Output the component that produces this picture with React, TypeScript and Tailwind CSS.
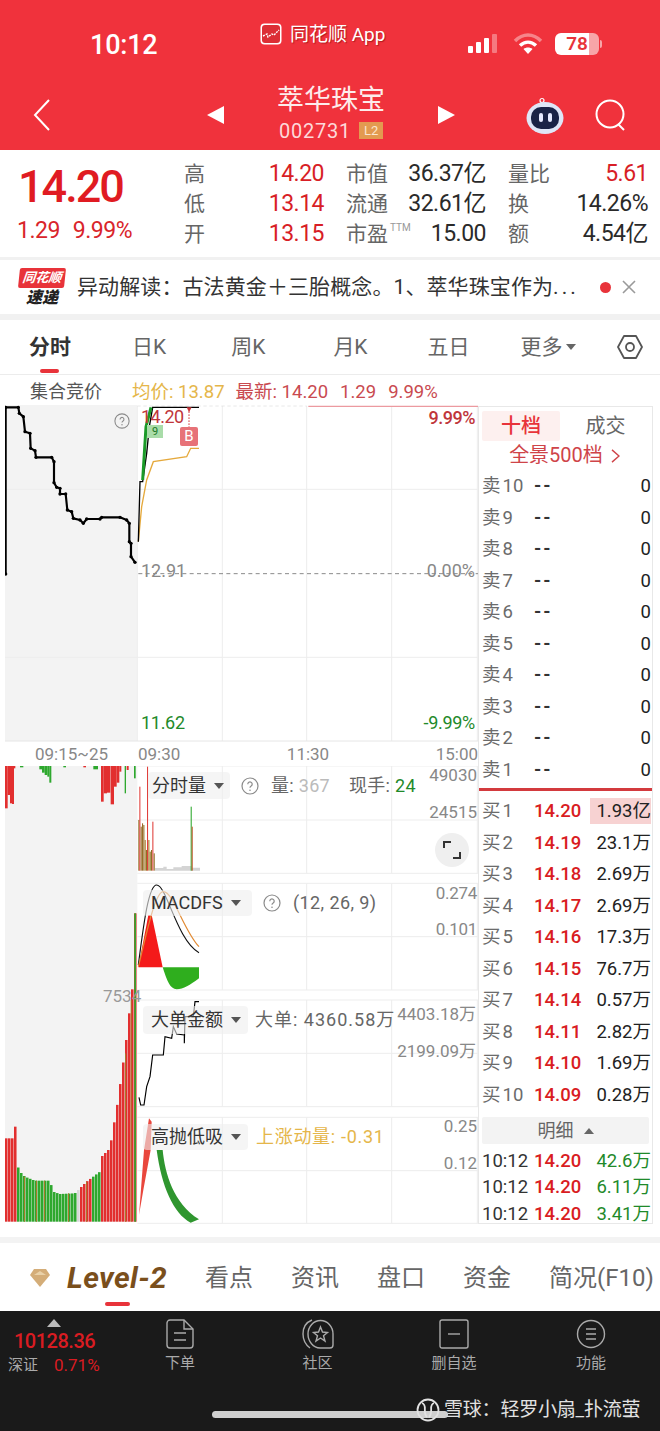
import React from "react";

type Seg = [number, number];
function interp(pts: Seg[], x: number) {
  for (let i = 0; i < pts.length - 1; i++) {
    if (x >= pts[i][0] && x <= pts[i + 1][0]) {
      const t = (x - pts[i][0]) / (pts[i + 1][0] - pts[i][0] || 1);
      return pts[i][1] + t * (pts[i + 1][1] - pts[i][1]);
    }
  }
  return pts[pts.length - 1][1];
}

const bottomProfile: Seg[] = [[15,1305],[18,1305],[19,1135],[44,1135],[45,1100],[48,1100],[50,1210],[60,1235],[75,1250],[105,1262],[150,1262],[160,1295],[180,1302],[225,1300],[260,1265],[300,1235],[305,1190],[330,1165],[345,1075],[358,1000],[365,935],[375,880],[381,820],[388,760],[398,680],[403,680],[404,460],[408,460]];
function bottomColor(x: number) {
  if (x < 49) return "#e22f2f";
  if (x < 155) return "#2ea82e";
  if (x >= 224 && x < 234) return "#d8d8d8";
  if (x < 234) return "#2ea82e";
  if (x < 272) return "#e22f2f";
  if (x < 303) return "#2ea82e";
  return "#e22f2f";
}
const topBars: [number, number, number, string][] = [
  [15,8,145,"#e22f2f"],[23,7,105,"#e22f2f"],[30,6,130,"#e22f2f"],[36,6,132,"#e22f2f"],[42,4,25,"#e22f2f"],
  [60,10,22,"#2ea82e"],[118,8,28,"#2ea82e"],[126,8,38,"#2ea82e"],[134,8,45,"#2ea82e"],[142,6,50,"#2ea82e"],[148,6,68,"#2ea82e"],
  [190,8,22,"#2ea82e"],[250,8,22,"#e22f2f"],[280,14,28,"#2ea82e"],
  [303,8,125,"#e22f2f"],[311,10,100,"#e22f2f"],[321,10,98,"#e22f2f"],[332,10,133,"#e22f2f"],[342,8,80,"#e22f2f"],[350,8,68,"#e22f2f"],[358,6,35,"#e22f2f"],
  [374,4,100,"#2ea82e"],[380,6,30,"#e22f2f"],[402,5,55,"#2ea82e"],
];
const auction: Seg[] = [[17,762],[17,262],[55,262],[58,280],[70,290],[75,335],[90,340],[92,385],[105,392],[108,412],[155,412],[162,425],[162,488],[170,502],[180,505],[180,522],[197,522],[202,570],[215,575],[220,595],[240,600],[250,610],[260,597],[300,597],[305,592],[360,592],[380,600],[388,610],[388,665],[393,670],[393,710],[405,727]];
const volBars: [number, number, string][] = [[415,180,"#8f6f25"],[418,80,"#e0403c"],[422,200,"#8f6f25"],[426,190,"#9a6a2a"],[430,195,"#8f6f25"],[434,240,"#a8792a"],[438,270,"#8f6f25"],[441,20,"#e0403c"],[445,240,"#a8792a"],[449,275,"#8f6f25"],[453,270,"#8f6f25"],[457,185,"#e0403c"],[461,280,"#8f6f25"],[572,140,"#2ea82e"],[575,200,"#c0572a"]];

function Question({ className }: { className: string }) {
  return (
    <svg viewBox="0 0 18 18" className={className} fill="none">
      <circle cx="9" cy="9" r="8" stroke="#8a8a8a" strokeWidth="1.2" />
      <path d="M6.8 7.2a2.2 2.2 0 1 1 3.4 1.8c-.8.5-1.2.9-1.2 1.8" stroke="#8a8a8a" strokeWidth="1.2" />
      <circle cx="9" cy="13.2" r=".8" fill="#8a8a8a" />
    </svg>
  );
}

function Caret() {
  return <span className="ml-[8px] inline-block h-0 w-0 border-x-[5px] border-t-[6px] border-x-transparent border-t-[#555]" />;
}

function MainChart() {
  return (
    <svg viewBox="15 255 1419 1011" className="block h-[337px] w-[473px]" fill="none">
      <rect x="15" y="255" width="397" height="1008" fill="#f3f3f3" />
      {[508, 1012].map((y) => <line key={y} x1="15" x2="1434" y1={y} y2={y} stroke="#ededed" strokeWidth="3" />)}
      {[412, 667, 920, 1175, 1432].map((x) => <line key={x} x1={x} x2={x} y1="258" y2="1263" stroke="#ededed" strokeWidth="3" />)}
      <line x1="15" x2="1434" y1="1263" y2="1263" stroke="#e6e6e6" strokeWidth="3" />
      <line x1="412" x2="920" y1="258" y2="258" stroke="#ddd" strokeWidth="2" strokeDasharray="10 8" />
      <line x1="925" x2="1434" y1="259" y2="259" stroke="#ec9aa0" strokeWidth="4" />
      <line x1="415" x2="1434" y1="761" y2="761" stroke="#8a8a8a" strokeWidth="3" strokeDasharray="12 10" />
      <polyline points={auction.map((p) => p.join(",")).join(" ")} stroke="#000" strokeWidth="6.5" strokeLinejoin="round" />
      {auction.map(([x, y]) => <circle key={`${x}-${y}`} cx={x} cy={y} r="5" fill="#000" />)}
      <path d="M415 665L425 560L440 480L460 425L560 410L572 385H597" stroke="#e5a93c" strokeWidth="4" />
      <path d="M415 665L420 485H428L440 400L448 320L458 262H597" stroke="#000" strokeWidth="4" />
      <path d="M428 480L438 320L453 262" stroke="#1b9a28" strokeWidth="9" />
      <line x1="567" x2="567" y1="265" y2="322" stroke="#d33a3e" strokeWidth="3" strokeDasharray="5 4" />
      <path d="M560 262H575L567 277Z" fill="#c9353a" />
    </svg>
  );
}

function LowerCharts() {
  const bars: React.ReactElement[] = [];
  for (let x = 15; x < 408; x += 9) {
    const top = interp(bottomProfile, x + 4);
    bars.push(<rect key={x} x={x} y={top} width="7.6" height={1385 - top} fill={bottomColor(x)} />);
  }
  const grid = [[18, 340, 180], [370, 690, 530], [720, 1040, 880], [1072, 1390, 1232]];
  return (
    <svg viewBox="15 18 1419 1374" className="block h-[458px] w-[473px]" fill="none">
      <rect x="15" y="18" width="397" height="1368" fill="#f3f3f3" />
      {topBars.map(([x, w, b, c], i) => <rect key={i} x={x} y="18" width={w} height={b - 18} fill={c} />)}
      {bars}
      <rect x="403" y="460" width="5" height="925" fill="#2ea82e" />
      {[[72, 1250], [108, 1262], [132, 1262], [204, 1300], [258, 1265], [375, 880], [392, 720]].map(([x, y]) => (
        <rect key={x} x={x} y={y} width="3" height={1385 - y} fill="#a8792a" />
      ))}
      {grid.map(([t, b, m]) => (
        <g key={t} stroke="#ededed" strokeWidth="3">
          <line x1="412" x2="1434" y1={t} y2={t} />
          <line x1="412" x2="1434" y1={m} y2={m} />
          <line x1="412" x2="1434" y1={b} y2={b} />
          {[667, 920, 1175, 1432].map((x) => <line key={x} x1={x} x2={x} y1={t} y2={b} />)}
        </g>
      ))}
      {/* volume */}
      <path d="M465 332V324H490V320H500V327H520V322H545V318H575V323H600V332Z" fill="#d4d4d4" />
      {volBars.map(([x, y, c]) => <rect key={x} x={x} y={y} width="3.2" height={332 - y} fill={c} />)}
      {/* macd */}
      <path d="M415 622L445 465H455L488 622Z" fill="#f41a1a" />
      <path d="M488 622H597V655C570 675 550 688 530 688C510 688 500 660 488 622Z" fill="#2fae1e" />
      <path d="M415 615C430 500 445 375 470 375C500 375 530 540 597 578" stroke="#111" strokeWidth="3.5" />
      <path d="M415 620C440 520 465 395 490 395C520 395 550 510 597 560" stroke="#e28a32" strokeWidth="3.5" />
      {/* big order */}
      <path d="M417 1012L422 1035H432L440 980L450 950L458 885H490L495 830L515 835L520 800L530 822L553 825V850L555 770H580L585 725H597" stroke="#000" strokeWidth="3.5" />
      {/* high low */}
      <path d="M417 1365L432 1170L447 1075L455 1085L452 1170L430 1290Z" fill="#e9473d" />
      <path d="M470 1170H488C495 1240 520 1330 597 1378L572 1388C520 1360 485 1280 470 1170Z" fill="#2f962f" />
    </svg>
  );
}

function Book({ label, price, value, up, hl }: { label: string; price: string; value: string; up: boolean; hl?: boolean }) {
  const [ch, num] = label.split(" ");
  return (
    <div className="grid h-[31.5px] grid-cols-[52px_50px_1fr] items-center text-[18.5px] leading-[26px]">
      <div className="text-[#6b6b6b]">{ch}<span className="ml-[2px]">{num}</span></div>
      <div className={up ? "font-medium text-[#d91c22]" : "font-bold tracking-[2px] text-[#333]"}>{price}</div>
      <div className="flex justify-end">
        <span className={hl ? "bg-[#f7d2d2] pl-[6px] text-[#222]" : "text-[#222]"}>{value}</span>
      </div>
    </div>
  );
}

function Expand() {
  return (
    <svg viewBox="0 0 34 34" className="h-[34px] w-[34px]" fill="none">
      <circle cx="17" cy="17" r="17" fill="#efefef" />
      <path d="M9 15V9H16M25 19V25H18" stroke="#333" strokeWidth="2" />
    </svg>
  );
}

export default function App() {
  const quote: [string, string, string, string, string, string][] = [
    ["高", "14.20", "市值", "36.37亿", "量比", "5.61"],
    ["低", "13.14", "流通", "32.61亿", "换", "14.26%"],
    ["开", "13.15", "市盈", "15.00", "额", "4.54亿"],
  ];
  const sells = [10, 9, 8, 7, 6, 5, 4, 3, 2, 1];
  const buys: [string, string][] = [["14.20","1.93亿"],["14.19","23.1万"],["14.18","2.69万"],["14.17","2.69万"],["14.16","17.3万"],["14.15","76.7万"],["14.14","0.57万"],["14.11","2.82万"],["14.10","1.69万"],["14.09","0.28万"]];
  const trades = [["10:12","14.20","42.6万"],["10:12","14.20","6.11万"],["10:12","14.20","3.41万"]];

  return (
    <div className="relative flex h-[1431px] w-[660px] flex-col overflow-hidden bg-white font-['Roboto','Noto_Sans_CJK_SC',sans-serif]">
      {/* header */}
      <header className="h-[150px] shrink-0 bg-[#F0323C] text-white">
        <div className="flex h-[75px]">
          <div className="w-[260px] pl-[90px] pt-[27px] text-[27px] font-medium leading-[36px] tracking-[-0.2px]">10:12</div>
          <div className="flex w-[208px] items-start gap-[8px] pt-[23px]">
            <svg viewBox="0 0 22 22" className="h-[22px] w-[22px]">
              <rect x="0.500" y="0.500" width="21" height="21" rx="4" fill="#fff" />
              <rect x="2" y="2" width="18" height="18" rx="3" fill="#dc2e35" />
              <path d="M3 13L7 11L8 14L12 11L14 12L19 7" stroke="#fff" strokeWidth="1.4" fill="none" strokeDasharray="2 1" />
            </svg>
            <span className="text-[19px] leading-[24px] [text-shadow:1px_1px_1px_rgba(120,0,0,0.5)]">同花顺 App</span>
          </div>
          <div className="flex items-start pt-[33px]">
            <svg viewBox="0 0 32 20" className="h-[20px] w-[32px]">
              <rect x="0" y="13" width="5" height="7" rx="1" fill="#fff" />
              <rect x="8" y="9" width="5" height="11" rx="1" fill="#fff" />
              <rect x="16" y="5" width="5" height="15" rx="1" fill="#fff" />
              <rect x="24" y="1" width="5" height="19" rx="1" fill="#fff" fillOpacity="0.35" />
            </svg>
            <svg viewBox="0 0 30 22" className="ml-[13px] h-[22px] w-[30px]" fill="none">
              <path d="M2 8C10 0 20 0 28 8" stroke="#fff" strokeOpacity="0.4" strokeWidth="3.500" />
              <path d="M7 12.500C12 8 18 8 23 12.500" stroke="#fff" strokeWidth="3.500" />
              <path d="M15 21L10.500 16C13 14 17 14 19.500 16Z" fill="#fff" />
            </svg>
            <div className="ml-[12px] flex h-[22px] w-[44px] items-center justify-center rounded-[6px] bg-[linear-gradient(90deg,#fff_78%,#f7a5a8_78%)] text-[19px] font-semibold leading-[22px] text-[#e8333a]">78</div>
            <div className="ml-[1px] mt-[7px] h-[8px] w-[2px] rounded-r-[2px] bg-[#f7a5a8]" />
          </div>
        </div>
        <div className="flex h-[75px] items-center">
          <div className="w-[207px] pl-[33px] pt-[4px]">
            <svg viewBox="0 0 18 32" className="h-[32px] w-[18px]" fill="none">
              <path d="M16 1L2 16L16 31" stroke="#fff" strokeWidth="2" />
            </svg>
          </div>
          <svg viewBox="0 0 17 18" className="mt-[4px] h-[18px] w-[17px]"><path d="M17 0V18L0 9Z" fill="#fff" /></svg>
          <div className="flex w-[214px] flex-col items-center">
            <div className="text-[27px] leading-[34px] text-[#fdecec]">萃华珠宝</div>
            <div className="mt-[2px] flex items-center gap-[8px]">
              <span className="text-[20px] leading-[24px] tracking-[0.8px] text-[#fdd9da]">002731</span>
              <span className="flex h-[17px] w-[24px] items-center justify-center bg-[#e39a50] text-[13px] leading-[17px] text-[#fbe6cf]">L2</span>
            </div>
          </div>
          <svg viewBox="0 0 17 18" className="mt-[4px] h-[18px] w-[17px]"><path d="M0 0V18L17 9Z" fill="#fff" /></svg>
          <svg viewBox="0 0 38 38" className="ml-[71px] mt-[6px] h-[38px] w-[38px]">
            <circle cx="16" cy="3.500" r="2" fill="none" stroke="#fff" strokeWidth="1.200" />
            <ellipse cx="19" cy="21" rx="18.500" ry="16" fill="#dfe6f7" />
            <rect x="5" y="10" width="28" height="22" rx="10" fill="#1a2346" />
            <rect x="13" y="16" width="4" height="9" rx="2" fill="#e6eaff" />
            <rect x="22" y="16" width="4" height="9" rx="2" fill="#e6eaff" />
          </svg>
          <svg viewBox="0 0 32 32" className="ml-[31px] mt-[4px] h-[32px] w-[32px]" fill="none">
            <circle cx="15" cy="15" r="13.500" stroke="#fff" strokeWidth="2" />
            <path d="M23 25L29 31" stroke="#fff" strokeWidth="2" />
          </svg>
        </div>
      </header>

      {/* quote */}
      <section className="flex h-[107px] shrink-0">
        <div className="w-[184px] pl-[18px] pt-[15px]">
          <div className="text-[45px] font-medium leading-[44px] tracking-[-2px] text-[#e01b22]">14.20</div>
          <div className="-ml-[1px] mt-[9px] flex gap-[13px] text-[23px] leading-[26px] tracking-[-0.5px] text-[#d9252b]">
            <span>1.29</span>
            <span>9.99%</span>
          </div>
        </div>
        <div className="w-[464px] pt-[9px]">
          {quote.map((r) => (
            <div key={r[0]} className="grid h-[30px] grid-cols-[140px_140px_140px] gap-x-[22px] text-[21px] leading-[30px]">
              <div className="flex justify-between">
                <span className="text-[#666]">{r[0]}</span>
                <span className="text-[23px] tracking-[-0.5px] text-[#d81e26]">{r[1]}</span>
              </div>
              <div className="flex justify-between">
                <span className="flex text-[#666]">
                  {r[2]}
                  {r[2] === "市盈" && <span className="ml-[2px] mt-[-6px] text-[10px] text-[#999]">TTM</span>}
                </span>
                <span className="text-[23px] tracking-[-0.5px] text-[#2a2a2a]">{r[3]}</span>
              </div>
              <div className="flex justify-between">
                <span className="text-[#666]">{r[4]}</span>
                <span className={r[4] === "量比" ? "text-[23px] tracking-[-0.5px] text-[#d81e26]" : "text-[23px] tracking-[-0.5px] text-[#2a2a2a]"}>{r[5]}</span>
              </div>
            </div>
          ))}
        </div>
      </section>
      <div className="h-[3px] shrink-0 bg-[#f1f1f1]" />

      {/* banner */}
      <section className="flex h-[54px] shrink-0 items-center">
        <div className="ml-[19px] flex w-[46px] flex-col items-center">
          <div className="flex h-[20px] w-[46px] -skew-x-6 items-center justify-center rounded-[2px] bg-[#e8333a] text-[13px] font-bold italic leading-[20px] text-white">同花顺</div>
          <div className="mt-[1px] text-[16px] font-black italic leading-[18px] text-[#222]">速递</div>
        </div>
        <div className="ml-[12px] w-[500px] whitespace-nowrap text-[21px] leading-[28px] tracking-[0.1px] text-[#333]">异动解读：古法黄金＋三胎概念。1、萃华珠宝作为<span className="tracking-[3px]">...</span></div>
        <span className="ml-[23px] h-[11px] w-[11px] rounded-full bg-[#e8333a]" />
        <svg viewBox="0 0 14 14" className="ml-[11px] h-[14px] w-[14px]" fill="none">
          <path d="M1 1L13 13M13 1L1 13" stroke="#9a9a9a" strokeWidth="1.600" />
        </svg>
      </section>
      <div className="h-[6px] shrink-0 bg-[#f1f1f1]" />

      {/* tabs */}
      <nav className="relative flex h-[55px] shrink-0 items-center border-b border-[#ececec] text-[21px] leading-[28px] text-[#666]">
        <span className="ml-[29px] font-bold text-[#333]">分时</span>
        <span className="ml-[61px]">日K</span>
        <span className="ml-[65px]">周K</span>
        <span className="ml-[68px]">月K</span>
        <span className="ml-[60px]">五日</span>
        <span className="ml-[51px] flex items-center">更多<span className="ml-[3px] h-0 w-0 border-x-[5px] border-t-[6px] border-x-transparent border-t-[#666]" /></span>
        <svg viewBox="0 0 26 24" className="ml-[41px] h-[24px] w-[26px]" fill="none">
          <path d="M7 1H19L25 12L19 23H7L1 12Z" stroke="#555" strokeWidth="1.800" strokeLinejoin="round" />
          <circle cx="13" cy="12" r="4" stroke="#555" strokeWidth="1.800" />
        </svg>
        <span className="absolute bottom-[1px] left-[40px] h-[4px] w-[19px] rounded-full bg-[#e8333a]" />
      </nav>

      {/* info */}
      <div className="flex h-[30px] shrink-0 items-center pt-[3px] leading-[24px]">
        <span className="ml-[30px] text-[18px] text-[#555]">集合竞价</span>
        <span className="ml-[30px] text-[18.500px] text-[#e5b64a]">均价: 13.87</span>
        <span className="ml-[11px] text-[18.500px] text-[#c94a50]">最新: 14.20</span>
        <span className="ml-[12px] text-[18.500px] text-[#c94a50]">1.29</span>
        <span className="ml-[12px] text-[18.500px] text-[#c94a50]">9.99%</span>
      </div>

      {/* chart + book */}
      <main className="flex h-[819px] shrink-0">
        <div className="w-[478px] shrink-0 pl-[5px]">
          <div className="relative h-[337px] w-[473px]">
            <MainChart />
            <Question className="absolute left-[109px] top-[8px] h-[16px] w-[16px]" />
            <span className="absolute left-[147px] top-[24px] flex h-[13px] w-[16px] -translate-x-[5px] -translate-y-[4px] items-center justify-center bg-[#a9dca9] text-[11px] leading-[13px] text-[#1b7a28]">9</span>
            <span className="absolute left-[136px] top-[3px] text-[18px] leading-[18px] tracking-[-0.5px] text-[#c0363b]">14.20</span>
            <span className="absolute right-[3px] top-[1px] text-[18px] font-medium leading-[24px] tracking-[-0.5px] text-[#c0363b]">9.99%</span>
            <span className="absolute left-[136px] top-[154px] text-[18px] leading-[24px] text-[#888]">12.91</span>
            <span className="absolute right-[3px] top-[154px] text-[18px] leading-[24px] text-[#888]">0.00%</span>
            <span className="absolute left-[136px] top-[306px] text-[18px] leading-[24px] tracking-[-0.3px] text-[#1f8a2a]">11.62</span>
            <span className="absolute right-[3px] top-[306px] text-[18px] leading-[24px] tracking-[-0.3px] text-[#1f8a2a]">-9.99%</span>
            <span className="absolute left-[175px] top-[22px] flex h-[19px] w-[18px] items-center justify-center rounded-[2px] bg-[#e77278] text-[15px] leading-[19px] text-white">B</span>
          </div>
          <div className="flex h-[24px] items-center text-[17px] leading-[24px] text-[#888]">
            <span className="w-[133px] text-center">09:15~25</span>
            <div className="flex flex-1 justify-between">
              <span>09:30</span>
              <span>11:30</span>
              <span>15:00</span>
            </div>
          </div>
          <div className="relative h-[458px] w-[473px]">
            <LowerCharts />
            <span className="absolute left-[98px] top-[219px] text-[17px] leading-[22px] text-[#999]">7534</span>

            <div className="absolute left-[143px] top-[6px] flex h-[27px] w-[82px] items-center rounded-[4px] bg-[#eeeeee]/60 pl-[4px] text-[18px] leading-[24px] text-[#333]">分时量<Caret /></div>
            <Question className="absolute left-[236px] top-[11px] h-[18px] w-[18px]" />
            <span className="absolute left-[266px] top-[8px] text-[18px] leading-[24px] tracking-[0.3px] text-[#666]">量: <span className="text-[#bbb]">367</span></span>
            <span className="absolute left-[344px] top-[8px] text-[18px] leading-[24px] tracking-[0.3px] text-[#666]">现手: <span className="text-[#1f8a2a]">24</span></span>
            <span className="absolute right-[1px] top-[-3px] text-[17px] leading-[24px] text-[#888]">49030</span>
            <span className="absolute right-[1px] top-[34px] text-[17px] leading-[24px] text-[#888]">24515</span>
            <div className="absolute left-[430px] top-[67px]"><Expand /></div>

            <div className="absolute left-[138px] top-[124px] flex h-[26px] w-[109px] items-center rounded-[4px] bg-[#eeeeee]/60 pl-[8px] text-[18px] leading-[24px] text-[#333]">MACDFS<Caret /></div>
            <Question className="absolute left-[258px] top-[128px] h-[18px] w-[18px]" />
            <span className="absolute left-[288px] top-[125px] text-[18px] leading-[24px] tracking-[0.4px] text-[#666]">(12, 26, 9)</span>
            <span className="absolute right-[1px] top-[115px] text-[17px] leading-[24px] tracking-[-0.3px] text-[#888]">0.274</span>
            <span className="absolute right-[1px] top-[151px] text-[17px] leading-[24px] tracking-[-0.3px] text-[#888]">0.101</span>

            <div className="absolute left-[138px] top-[240px] flex h-[28px] w-[105px] items-center rounded-[4px] bg-[#eeeeee]/60 pl-[8px] text-[18px] leading-[24px] text-[#333]">大单金额<Caret /></div>
            <span className="absolute left-[250px] top-[242px] text-[18px] leading-[24px] tracking-[1px] text-[#666]">大单: 4360.58万</span>
            <span className="absolute right-[2px] top-[236px] text-[17px] leading-[24px] text-[#888]">4403.18万</span>
            <span className="absolute right-[2px] top-[273px] text-[17px] leading-[24px] text-[#888]">2199.09万</span>

            <div className="absolute left-[138px] top-[358px] flex h-[26px] w-[105px] items-center rounded-[4px] bg-[#eeeeee]/60 pl-[8px] text-[18px] leading-[24px] text-[#333]">高抛低吸<Caret /></div>
            <span className="absolute left-[251px] top-[359px] text-[18px] leading-[24px] tracking-[0.7px] text-[#e5b64a]">上涨动量: -0.31</span>
            <span className="absolute right-[1px] top-[348px] text-[17px] leading-[24px] text-[#888]">0.25</span>
            <span className="absolute right-[1px] top-[385px] text-[17px] leading-[24px] text-[#888]">0.12</span>
          </div>
        </div>

        <aside className="mt-[1px] h-[818px] w-[175px] border border-[#e8e8e8] pl-[3px] pr-[1px] pt-[4px]">
          <div className="flex h-[30px]">
            <div className="flex w-[78px] items-center justify-center rounded-[2px] bg-[#fdf0ef] text-[20px] font-medium leading-[28px] text-[#e8333a]">十档</div>
            <div className="flex flex-1 items-center justify-center text-[20px] leading-[28px] text-[#666]">成交</div>
          </div>
          <div className="flex h-[29.25px] items-center justify-center pr-[4px] text-[20px] leading-[29px] text-[#cf4449]">
            全景500档
            <svg viewBox="0 0 10 16" className="ml-[8px] h-[14px] w-[9px]" fill="none">
              <path d="M1 1L9 8L1 15" stroke="#cf4449" strokeWidth="1.600" />
            </svg>
          </div>
          {sells.map((n) => <Book key={n} label={`卖 ${n}`} price="--" value="0" up={false} />)}
          <div className="-ml-[3px] -mr-[1px] mt-[3px] h-[3px] bg-[#d33a3e]" />
          <div className="mt-[4px]">
            {buys.map(([p, v], i) => <Book key={p} label={`买 ${i + 1}`} price={p} value={v} up hl={i === 0} />)}
          </div>
          <div className="mr-[2px] mt-[7px] flex h-[27px] items-center justify-center gap-[10px] rounded-[2px] bg-[#f3f3f3] text-[18px] leading-[24px] text-[#666]">
            明细
            <span className="h-0 w-0 border-x-[5px] border-b-[6px] border-x-transparent border-b-[#666]" />
          </div>
          <div className="mt-[3px]">
            {trades.map((t) => (
              <div key={t[2]} className="grid h-[26.5px] grid-cols-[52px_50px_1fr] items-center text-[18.5px] leading-[26px]">
                <span className="text-[#333]">{t[0]}</span>
                <span className="font-medium text-[#d91c22]">{t[1]}</span>
                <span className="text-right text-[#1f8a2a]">{t[2]}</span>
              </div>
            ))}
          </div>
        </aside>
      </main>

      <div className="mt-[13px] h-[6px] shrink-0 bg-[#f3f3f3]" />

      {/* bottom tabs */}
      <nav className="relative flex h-[68px] shrink-0 items-center pt-[2px] text-[24px] leading-[30px] text-[#666]">
        <svg viewBox="0 0 20 18" className="ml-[30px] h-[18px] w-[20px]">
          <path d="M4 0H16L20 6L10 18L0 6Z" fill="#d4ad78" />
          <path d="M4 6H16L10 2Z" fill="#e9d1a8" />
        </svg>
        <span className="ml-[17px] w-[101px] whitespace-nowrap text-[30px] font-bold italic tracking-[0.4px] text-[#7a4f1c]">Level-2</span>
        <span className="ml-[37px]">看点</span>
        <span className="ml-[38px]">资讯</span>
        <span className="ml-[38px]">盘口</span>
        <span className="ml-[38px]">资金</span>
        <span className="ml-[38px] whitespace-nowrap">简况(F10)</span>
        <span className="absolute bottom-[5px] left-[105px] h-[4px] w-[25px] rounded-full bg-[#e8333a]" />
      </nav>

      {/* dark nav */}
      <footer className="relative grid h-[120px] shrink-0 grid-cols-[111px_138px_137px_136px_138px] bg-[#1a1a1a] pt-[8px] text-[#aaa]">
        <div className="pl-[8px]">
          <div className="ml-[39px] h-0 w-0 border-x-[7px] border-b-[8px] border-x-transparent border-b-[#bbb]" />
          <div className="ml-[6px] mt-[2px] text-[20px] font-medium leading-[24px] tracking-[-0.5px] text-[#d91c22]">10128.36</div>
          <div className="mt-[1px] flex items-center text-[15px] leading-[22px]">
            <span>深证</span>
            <span className="ml-[16px] text-[17px] text-[#d91c22]">0.71%</span>
          </div>
        </div>
        <div className="flex flex-col items-center">
          <svg viewBox="0 0 28 30" className="h-[30px] w-[28px]" fill="none" stroke="#aaa" strokeWidth="1.400">
            <path d="M4 1H18L27 10V26a3 3 0 0 1-3 3H4a3 3 0 0 1-3-3V4a3 3 0 0 1 3-3Z" />
            <path d="M18 1V10H27M8 14H20M8 21H20" />
          </svg>
          <span className="mt-[3px] text-[15px] leading-[22px]">下单</span>
        </div>
        <div className="flex flex-col items-center">
          <svg viewBox="0 0 32 30" className="h-[30px] w-[32px]" fill="none" stroke="#aaa" strokeWidth="1.400">
            <path d="M8 29C4 26 1 21 1 15C1 8 5 3 10 1" />
            <path d="M6 15A12.500 13.500 0 0 1 31 15V26a3 3 0 0 1-3 3H18A12.500 14 0 0 1 6 15Z" />
            <path d="M18.500 8L20.500 13L25.500 13.500L21.500 16.800L23 22L18.500 19L14 22L15.500 16.800L11.500 13.500L16.500 13Z" />
          </svg>
          <span className="mt-[3px] text-[15px] leading-[22px]">社区</span>
        </div>
        <div className="flex flex-col items-center">
          <svg viewBox="0 0 30 30" className="h-[30px] w-[30px]" fill="none" stroke="#aaa" strokeWidth="1.400">
            <rect x="1" y="1" width="28" height="28" rx="2" />
            <path d="M9 15H21" />
          </svg>
          <span className="mt-[3px] text-[15px] leading-[22px]">删自选</span>
        </div>
        <div className="flex flex-col items-center">
          <svg viewBox="0 0 30 30" className="h-[30px] w-[30px]" fill="none" stroke="#aaa" strokeWidth="1.400">
            <circle cx="15" cy="15" r="13.500" />
            <path d="M10 10H20M10 15H20M10 20H20" />
          </svg>
          <span className="mt-[3px] text-[15px] leading-[22px]">功能</span>
        </div>
        <div className="absolute left-[212px] top-[100px] h-[7px] w-[236px] rounded-full bg-[#cfcfcf]" />
        <div className="absolute left-[416px] top-[86px] flex items-center text-[19px] leading-[26px] tracking-[-0.2px] text-[#e2e2e2]">
          <svg viewBox="0 0 24 24" className="h-[24px] w-[24px]" fill="none" stroke="#e2e2e2" strokeWidth="1.800">
            <circle cx="12" cy="12" r="10.500" />
            <path d="M6 5C12 7 6 14 11 19M18 5C12 7 18 14 13 19" />
          </svg>
          <span className="ml-[4px] whitespace-nowrap">雪球：轻罗小扇_扑流萤</span>
        </div>
      </footer>
    </div>
  );
}
